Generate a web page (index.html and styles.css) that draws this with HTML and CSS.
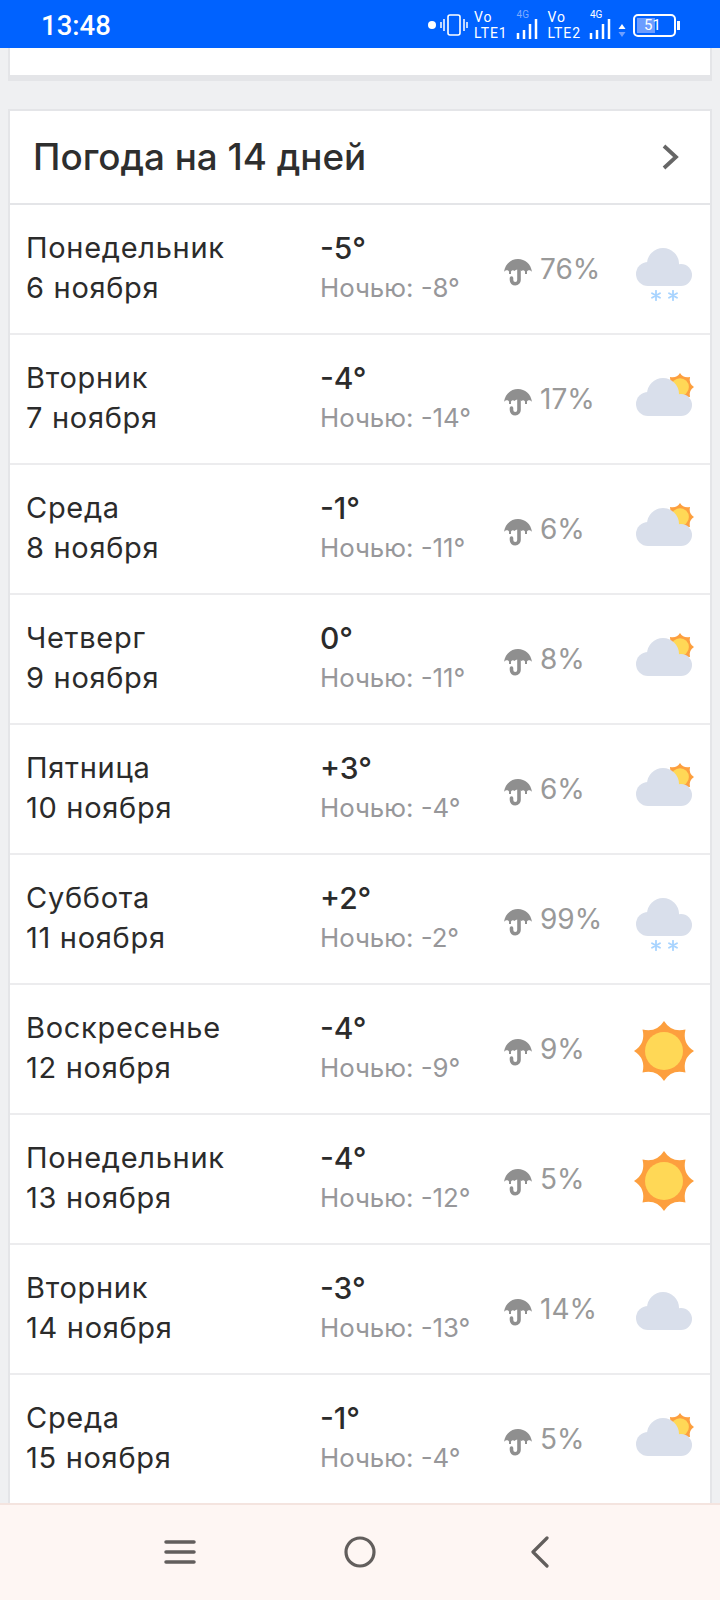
FILE: index.html
```html
<!DOCTYPE html>
<html lang="ru">
<head>
<meta charset="utf-8">
<title>Погода на 14 дней</title>
<link rel="stylesheet" href="styles.css">
</head>
<body>
<svg class="defs" width="0" height="0" aria-hidden="true">
  <defs>
    <symbol id="umb" viewBox="0 0 30 28">
      <path d="M15 1C8 1 2 6 1 14c1-2 4-2.500 5-.5v2.500h2v-2.500c1-1.500 2.500-1.500 3.500-.5 1-1 2-1.500 3.500-1.500s2.500 .5 3.500 1.500c1-1 2.500-1 3.500 .5v2.500h2v-2.500c1-2 4-1.500 5 .5C28 6 22 1 15 1z" fill="#8f8f8f"/>
      <path d="M16 10v12c0 2-1.500 3.800-3.700 3.800S8.500 24 8.500 22v-2" stroke="#8f8f8f" stroke-width="3.600" fill="none" stroke-linecap="round"/>
    </symbol>
    <symbol id="cloud" viewBox="0 0 56 38">
      <g fill="#d9dfeb">
        <circle cx="12" cy="26" r="12"/>
        <circle cx="27" cy="16" r="16"/>
        <circle cx="45" cy="27" r="11"/>
        <rect x="12" y="20" width="33" height="18"/>
      </g>
    </symbol>
    <symbol id="sun" viewBox="0 0 60 60">
      <path d="M30 0Q37.500 12 51.500 8.500Q48 22.500 60 30Q48 37.500 51.500 51.500Q37.500 48 30 60Q22.500 48 8.500 51.500Q12 37.500 0 30Q12 22.500 8.500 8.500Q22.500 12 30 0z" fill="#fd9f3e"/>
      <circle cx="30" cy="30" r="19" fill="#ffd856"/>
    </symbol>
    <symbol id="flakes" viewBox="0 0 28 11">
      <g stroke="#a8d4ff" stroke-width="1.800" stroke-linecap="round">
        <path d="M5 .8v9.400M1 3.200l8 4.600M9 3.200l-8 4.600"/>
        <path d="M22 .8v9.400M18 3.200l8 4.600M26 3.200l-8 4.600"/>
      </g>
    </symbol>
  </defs>
</svg>

<header class="status">
  <span class="time">13:48</span>
  <div class="status-icons">
    <span class="dot"></span>
    <svg class="vib" width="28" height="22" viewBox="0 0 28 22"><path d="M1 8v6M4 5v12M24 5v12M27 8v6" stroke="#fff" stroke-width="1.500" fill="none"/><rect x="8" y="1" width="12" height="20" rx="2" stroke="#fff" stroke-width="1.600" fill="none"/></svg>
    <span class="vo"><span>Vo</span><span>LTE1</span></span>
    <span class="signal"><span class="g dim">4G</span><svg width="22" height="22" viewBox="0 0 22 22"><path d="M2 15v6M8 12v9M14 6v15M20 1v20" stroke="#fff" stroke-width="2.500"/></svg></span>
    <span class="vo"><span>Vo</span><span>LTE2</span></span>
    <span class="signal"><span class="g">4G</span><svg width="22" height="22" viewBox="0 0 22 22"><path d="M2 15v6M8 12v9M14 6v15M20 1v20" stroke="#fff" stroke-width="2.500"/></svg></span>
    <svg class="updown" width="8" height="13" viewBox="0 0 8 13"><path d="M4 0l3.500 5h-7z" fill="#fff"/><path d="M4 13l3.500-5h-7z" fill="#6f9fff"/></svg>
    <span class="battery"><span class="level">51</span></span>
    <span class="cap"></span>
  </div>
</header>

<main class="content">
  <div class="prev-card"></div>
  <section class="card">
    <div class="card-head">
      <h1>Погода на 14 дней</h1>
      <svg class="chev" width="20" height="28" viewBox="0 0 20 28"><path d="M3 3l12 11L3 25" stroke="#666" stroke-width="3.800" fill="none"/></svg>
    </div>

    <div class="row">
      <div class="day"><span class="d1">Понедельник</span><span class="d2">6 ноября</span></div>
      <div class="temp"><span class="t1">-5°</span><span class="t2">Ночью: -8°</span></div>
      <div class="rain"><svg class="umb"><use href="#umb"/></svg><span class="pct">76%</span></div>
      <div class="wx"><svg class="cl"><use href="#cloud"/></svg><svg class="fl"><use href="#flakes"/></svg></div>
    </div>

    <div class="row">
      <div class="day"><span class="d1">Вторник</span><span class="d2">7 ноября</span></div>
      <div class="temp"><span class="t1">-4°</span><span class="t2">Ночью: -14°</span></div>
      <div class="rain"><svg class="umb"><use href="#umb"/></svg><span class="pct">17%</span></div>
      <div class="wx"><svg class="sm"><use href="#sun"/></svg><svg class="cl"><use href="#cloud"/></svg></div>
    </div>

    <div class="row">
      <div class="day"><span class="d1">Среда</span><span class="d2">8 ноября</span></div>
      <div class="temp"><span class="t1">-1°</span><span class="t2">Ночью: -11°</span></div>
      <div class="rain"><svg class="umb"><use href="#umb"/></svg><span class="pct">6%</span></div>
      <div class="wx"><svg class="sm"><use href="#sun"/></svg><svg class="cl"><use href="#cloud"/></svg></div>
    </div>

    <div class="row">
      <div class="day"><span class="d1">Четверг</span><span class="d2">9 ноября</span></div>
      <div class="temp"><span class="t1">0°</span><span class="t2">Ночью: -11°</span></div>
      <div class="rain"><svg class="umb"><use href="#umb"/></svg><span class="pct">8%</span></div>
      <div class="wx"><svg class="sm"><use href="#sun"/></svg><svg class="cl"><use href="#cloud"/></svg></div>
    </div>

    <div class="row">
      <div class="day"><span class="d1">Пятница</span><span class="d2">10 ноября</span></div>
      <div class="temp"><span class="t1">+3°</span><span class="t2">Ночью: -4°</span></div>
      <div class="rain"><svg class="umb"><use href="#umb"/></svg><span class="pct">6%</span></div>
      <div class="wx"><svg class="sm"><use href="#sun"/></svg><svg class="cl"><use href="#cloud"/></svg></div>
    </div>

    <div class="row">
      <div class="day"><span class="d1">Суббота</span><span class="d2">11 ноября</span></div>
      <div class="temp"><span class="t1">+2°</span><span class="t2">Ночью: -2°</span></div>
      <div class="rain"><svg class="umb"><use href="#umb"/></svg><span class="pct">99%</span></div>
      <div class="wx"><svg class="cl"><use href="#cloud"/></svg><svg class="fl"><use href="#flakes"/></svg></div>
    </div>

    <div class="row">
      <div class="day"><span class="d1">Воскресенье</span><span class="d2">12 ноября</span></div>
      <div class="temp"><span class="t1">-4°</span><span class="t2">Ночью: -9°</span></div>
      <div class="rain"><svg class="umb"><use href="#umb"/></svg><span class="pct">9%</span></div>
      <div class="wx"><svg class="bigsun"><use href="#sun"/></svg></div>
    </div>

    <div class="row">
      <div class="day"><span class="d1">Понедельник</span><span class="d2">13 ноября</span></div>
      <div class="temp"><span class="t1">-4°</span><span class="t2">Ночью: -12°</span></div>
      <div class="rain"><svg class="umb"><use href="#umb"/></svg><span class="pct">5%</span></div>
      <div class="wx"><svg class="bigsun"><use href="#sun"/></svg></div>
    </div>

    <div class="row">
      <div class="day"><span class="d1">Вторник</span><span class="d2">14 ноября</span></div>
      <div class="temp"><span class="t1">-3°</span><span class="t2">Ночью: -13°</span></div>
      <div class="rain"><svg class="umb"><use href="#umb"/></svg><span class="pct">14%</span></div>
      <div class="wx plain"><svg class="cl"><use href="#cloud"/></svg></div>
    </div>

    <div class="row">
      <div class="day"><span class="d1">Среда</span><span class="d2">15 ноября</span></div>
      <div class="temp"><span class="t1">-1°</span><span class="t2">Ночью: -4°</span></div>
      <div class="rain"><svg class="umb"><use href="#umb"/></svg><span class="pct">5%</span></div>
      <div class="wx"><svg class="sm"><use href="#sun"/></svg><svg class="cl"><use href="#cloud"/></svg></div>
    </div>
  </section>
</main>

<nav class="navbar">
  <svg width="32" height="26" viewBox="0 0 32 26"><path d="M2 3h28M2 13h28M2 23h28" stroke="#625e5c" stroke-width="3.500" stroke-linecap="round"/></svg>
  <svg width="32" height="32" viewBox="0 0 32 32"><circle cx="16" cy="16" r="14" stroke="#625e5c" stroke-width="3.200" fill="none"/></svg>
  <svg width="20" height="32" viewBox="0 0 20 32"><path d="M17 2L3 16l14 14" stroke="#625e5c" stroke-width="3.200" fill="none" stroke-linecap="round" stroke-linejoin="round"/></svg>
</nav>
</body>
</html>
```
FILE: styles.css
```css
* { box-sizing: border-box; }
html, body { margin: 0; padding: 0; }
body {
  width: 720px;
  height: 1600px;
  overflow: hidden;
  display: flex;
  flex-direction: column;
  background: #eff0f2;
  font-family: Inter, "Noto Sans", sans-serif;
  color: #2b2b2b;
}
.defs { display: block; height: 0; }

.status {
  flex: 0 0 48px;
  background: #0062ff;
  color: #fff;
  display: flex;
  align-items: center;
  justify-content: space-between;
  padding: 2px 40px 0 41px;
}
.time { font: 500 27.500px Roboto, sans-serif; }
.status-icons { display: flex; align-items: center; font-family: Roboto, sans-serif; }
.dot { width: 8px; height: 8px; border-radius: 50%; background: #fff; margin-right: 4px; }
.vib { margin-right: 6px; }
.vo { display: flex; flex-direction: column; font-size: 14px; line-height: 16px; letter-spacing: .9px; margin-right: 8px; }
.signal { display: flex; flex-direction: column; align-items: flex-start; width: 24px; margin-right: 8px; }
.g { font-size: 10px; line-height: 10px; margin-left: 1px; }
.g.dim { color: #7fabff; }
.signal svg { margin-top: -2px; }
.updown { margin: 10px 7px 0 -3px; }
.battery {
  width: 43px; height: 23px;
  border: 2px solid #fff;
  border-radius: 5px;
  padding: 2px;
  display: flex;
}
.level {
  width: 18px;
  background: #6c9dff;
  font-size: 15px;
  line-height: 15px;
  padding-left: 7px;
  white-space: nowrap;
}
.cap { width: 3px; height: 9px; background: #fff; margin-left: 1px; }

.content { flex: 1; overflow: hidden; padding: 0 8px; display: flex; flex-direction: column; min-height: 0; }
.prev-card {
  flex: 0 0 33px;
  background: #fff;
  border: 2px solid #e4e5e8;
  border-top: 0;
  border-bottom: 6px solid #e4e5e8;
}
.card {
  margin-top: 28px;
  background: #fff;
  border: 2px solid #e4e5e8;
  flex: 0 0 auto;
}
.card-head {
  height: 94px;
  border-bottom: 2px solid #e4e5e8;
  display: flex;
  align-items: center;
  justify-content: space-between;
  padding: 0 29px 0 23px;
}
h1 { margin: 0 0 1px; font-size: 36.800px; font-weight: 500; color: #2e2e2e; }

.row {
  height: 130px;
  border-bottom: 2px solid #ececee;
  display: flex;
  align-items: center;
  padding: 0 14px 0 16px;
}
.day, .temp { display: flex; flex-direction: column; margin-top: -2px; }
.day { width: 294px; }
.temp { width: 183px; }
.d1, .d2 { font-size: 29px; line-height: 40px; letter-spacing: .7px; }
.t1 { font-size: 30px; line-height: 40px; font-weight: 500; }
.t2 { font-size: 25.800px; line-height: 40px; color: #97979a; }
.rain { display: flex; align-items: center; width: 133px; margin-top: -1px; }
.umb { width: 30px; height: 28px; margin-right: 7px; margin-top: 6px; }
.pct { font-size: 28px; color: #999; }
.wx { position: relative; width: 56px; height: 60px; }
.cl { position: absolute; left: 0; top: 9px; width: 56px; height: 38px; }
.plain .cl { top: 13px; }
.sm { position: absolute; left: 30px; top: 4px; width: 28px; height: 28px; }
.fl { position: absolute; left: 15px; top: 51px; width: 28px; height: 11px; }
.bigsun { position: absolute; left: -2px; top: 2px; width: 60px; height: 60px; display: block; }

.navbar {
  flex: 0 0 97px;
  background: #fef6f3;
  border-top: 2px solid #f4e4df;
  display: grid;
  grid-template-columns: repeat(3, 180px);
  justify-content: center;
  justify-items: center;
  align-items: center;
  padding-bottom: 2px;
}
```
